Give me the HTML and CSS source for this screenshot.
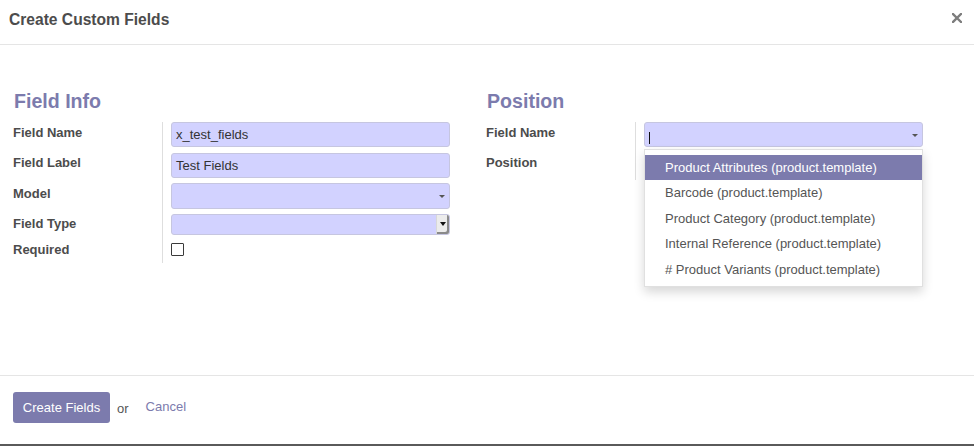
FILE: index.html
```html
<!DOCTYPE html>
<html>
<head>
<meta charset="utf-8">
<link rel="stylesheet" href="styles.css">
</head>
<body>
<div class="modal">
  <div class="modal-header">
    <h4 class="modal-title">Create Custom Fields</h4>
    <svg class="close" width="10" height="10" viewBox="0 0 10 10"><path d="M1 1L9 9M9 1L1 9" stroke="#7d7d7d" stroke-width="2.4" stroke-linecap="square"/></svg>
  </div>
  <div class="modal-body">
    <div class="group">
      <h2 class="group-title">Field Info</h2>
      <div class="grid">
        <div class="lbl">Field Name</div>
        <div class="cell r1"><div class="input">x_test_fields</div></div>
        <div class="lbl up1">Field Label</div>
        <div class="cell r2"><div class="input">Test Fields</div></div>
        <div class="lbl">Model</div>
        <div class="cell r3"><div class="input m2o"><span class="caret"></span></div></div>
        <div class="lbl up1">Field Type</div>
        <div class="cell r4"><div class="input select"><span class="sel-btn"><span class="sel-tri"></span></span></div></div>
        <div class="lbl tight">Required</div>
        <div class="cell r5"><div class="checkbox"></div></div>
      </div>
    </div>
    <div class="group">
      <h2 class="group-title">Position</h2>
      <div class="grid">
        <div class="lbl">Field Name</div>
        <div class="cell r1">
          <div class="input m2o focus"><span class="cursor"></span><span class="caret"></span></div>
          <ul class="menu">
            <li class="active">Product Attributes (product.template)</li>
            <li>Barcode (product.template)</li>
            <li>Product Category (product.template)</li>
            <li>Internal Reference (product.template)</li>
            <li># Product Variants (product.template)</li>
          </ul>
        </div>
        <div class="lbl up1">Position</div>
        <div class="cell r2b"></div>
      </div>
    </div>
  </div>
  <div class="modal-footer">
    <button class="btn-primary">Create Fields</button>
    <span class="or">or</span>
    <a class="cancel">Cancel</a>
  </div>
</div>
</body>
</html>
```
FILE: styles.css
```css
html, body {
  margin: 0;
  padding: 0;
}
body {
  background: #5a5a5a;
  height: 446px;
  overflow: hidden;
  font-family: "Liberation Sans", Arial, sans-serif;
  font-size: 13px;
  color: #4c4c4c;
}
.modal {
  background: #fff;
  height: 444px;
  display: flex;
  flex-direction: column;
}
.modal-header {
  height: 44px;
  flex: none;
  border-bottom: 1px solid #e5e5e5;
  display: flex;
  justify-content: space-between;
  padding: 0 12px 0 9px;
  box-sizing: content-box;
}
.modal-title {
  margin: 10px 0 0;
  font-size: 15.6px;
  line-height: 20px;
  font-weight: bold;
  color: #4c4c4c;
}
.close {
  margin-top: 13px;
}
.modal-body {
  flex: 1;
  display: grid;
  grid-template-columns: 473px 1fr;
  padding: 44px 0 0 13px;
}
.group-title {
  margin: 0 0 9px 1px;
  font-size: 19.6px;
  line-height: 24px;
  font-weight: bold;
  color: #7c7bad;
}
.grid {
  display: grid;
  grid-template-columns: 149px auto;
  justify-content: start;
}
.lbl {
  font-weight: bold;
  line-height: 18px;
  padding-top: 2px;
  color: #4c4c4c;
}
.lbl.up1 { padding-top: 1px; }
.lbl.tight { padding-top: 0; margin-top: -2px; }
.cell {
  position: relative;
  border-left: 1px solid #dedede;
  padding: 0 0 0 8px;
  width: 279px;
}
.r1 { height: 31px; }
.r2 { height: 30px; }
.r3 { height: 31px; }
.r4 { height: 29px; }
.r5 { height: 20px; }
.r2b { height: 27px; }
.input {
  position: relative;
  box-sizing: border-box;
  width: 279px;
  height: 25px;
  background: #d2d2ff;
  border: 1px solid #c6c6e0;
  border-radius: 3px;
  padding: 0 4px;
  line-height: 23px;
  color: #333;
}
.r3 .input { height: 26px; }
.input.select {
  height: 21px;
}
.caret {
  position: absolute;
  right: 4px;
  top: 11px;
  width: 0;
  height: 0;
  border-left: 3px solid transparent;
  border-right: 3px solid transparent;
  border-top: 3px solid #555;
}
.sel-btn {
  position: absolute;
  right: 0;
  top: 0;
  width: 12px;
  height: 19px;
  background: #ececec;
  border-left: 1px solid #d8d8d8;
  box-shadow: inset -2px -2px 0 #8a8a8a;
  border-radius: 0 2px 2px 0;
}
.sel-tri {
  position: absolute;
  left: 3px;
  top: 7px;
  width: 0;
  height: 0;
  border-left: 3.5px solid transparent;
  border-right: 3.5px solid transparent;
  border-top: 4px solid #111;
}
.cursor {
  position: absolute;
  left: 4px;
  top: 9px;
  width: 1px;
  height: 12px;
  background: #111;
}
.checkbox {
  box-sizing: border-box;
  width: 13px;
  height: 13px;
  border: 1px solid #3a3a3a;
  border-radius: 1px;
  background: #fff;
}
.menu {
  position: absolute;
  left: 8px;
  top: 27px;
  box-sizing: border-box;
  width: 279px;
  margin: 0;
  padding: 5px 0 4px;
  list-style: none;
  background: #fff;
  border: 1px solid rgba(0,0,0,0.12);
  box-shadow: 0 5px 10px rgba(0,0,0,0.16);
  z-index: 10;
}
.menu li {
  height: 25.4px;
  line-height: 25px;
  padding: 0 20px;
  color: #555;
  white-space: nowrap;
}
.menu li.active {
  background: #7c7bad;
  color: #fff;
}
.modal-footer {
  height: 69px;
  flex: none;
  border-top: 1px solid #e5e5e5;
  display: flex;
  align-items: flex-start;
  padding: 16px 0 0 13px;
  box-sizing: border-box;
}
.btn-primary {
  box-sizing: border-box;
  font-family: inherit;
  font-size: 13px;
  line-height: 19px;
  padding: 6px 0;
  border: 0;
  border-radius: 3px;
  background: #7c7bad;
  color: #fff;
  width: 97px;
  margin: 0;
  white-space: nowrap;
  text-align: center;
}
.or {
  margin: 7px 0 0 7px;
  line-height: 20px;
  color: #555;
}
.cancel {
  margin: 5px 0 0 17px;
  line-height: 20px;
  color: #7c7bad;
}
```
